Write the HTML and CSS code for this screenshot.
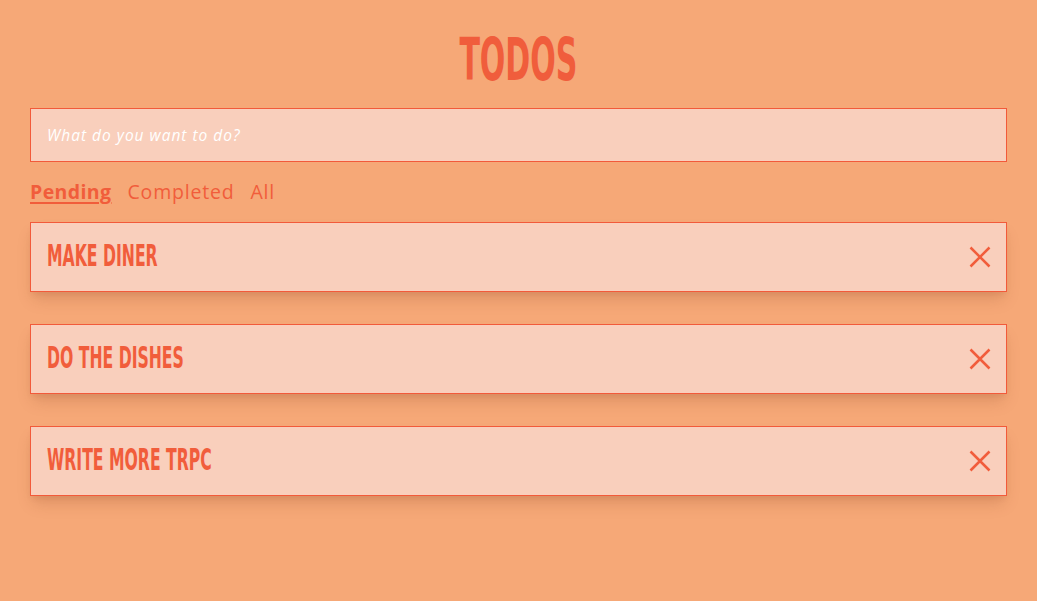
FILE: index.html
```html
<!DOCTYPE html>
<html lang="en">
<head>
<meta charset="utf-8">
<title>Todos</title>
<link rel="stylesheet" href="styles.css">
</head>
<body>
<main class="app">
  <h1 class="title"><span class="condensed">Todos</span></h1>
  <input class="new-todo" type="text" placeholder="What do you want to do?">
  <nav class="tabs">
    <a class="tab active" href="#">Pending</a>
    <a class="tab" href="#">Completed</a>
    <a class="tab" href="#">All</a>
  </nav>
  <ul class="list">
    <li class="card">
      <span class="card-text condensed">Make diner</span>
      <button class="remove" aria-label="Remove"><svg viewBox="0 0 22 22" width="22" height="22"><path d="M1.5 1.5 L20.5 20.5 M20.5 1.5 L1.5 20.5" /></svg></button>
    </li>
    <li class="card">
      <span class="card-text condensed">Do the dishes</span>
      <button class="remove" aria-label="Remove"><svg viewBox="0 0 22 22" width="22" height="22"><path d="M1.5 1.5 L20.5 20.5 M20.5 1.5 L1.5 20.5" /></svg></button>
    </li>
    <li class="card">
      <span class="card-text condensed">Write more tRPC</span>
      <button class="remove" aria-label="Remove"><svg viewBox="0 0 22 22" width="22" height="22"><path d="M1.5 1.5 L20.5 20.5 M20.5 1.5 L1.5 20.5" /></svg></button>
    </li>
  </ul>
</main>
</body>
</html>
```
FILE: styles.css
```css
html, body {
  margin: 0;
  padding: 0;
  background: #f6a877;
  height: 100%;
}
body {
  font-family: "Open Sans", "Liberation Sans", sans-serif;
  color: #f15d3b;
}
.app {
  padding: 27px 30px;
}
.condensed {
  display: inline-block;
  font-family: "DejaVu Sans Condensed", "DejaVu Sans", sans-serif;
  font-weight: 700;
  text-transform: uppercase;
  transform: scaleX(0.58);
}
.title {
  margin: 0;
  text-align: center;
  font-size: 59px;
  line-height: 60px;
  color: #f05d3c;
  font-weight: 700;
}
.title .condensed {
  transform: scaleX(0.565);
  transform-origin: center;
}
.new-todo {
  display: block;
  box-sizing: border-box;
  width: 100%;
  height: 54px;
  margin: 18px 0 0;
  padding: 0 16px;
  border: 1px solid #f25a3a;
  background: #f9cfbc;
  font-family: "Open Sans", sans-serif;
  font-size: 15.5px;
  letter-spacing: 1px;
  font-style: italic;
  color: #f15d3b;
  outline: none;
}
.new-todo::placeholder {
  color: #ffffff;
  opacity: 1;
}
.tabs {
  display: flex;
  gap: 16px;
  margin-top: 18px;
  font-size: 19.5px;
  letter-spacing: 0.8px;
  line-height: 24px;
}
.tab {
  color: #f15d3b;
  text-decoration: none;
}
.tab.active {
  font-weight: 700;
  letter-spacing: 0.4px;
  text-decoration: underline;
  text-decoration-thickness: 2px;
  text-underline-offset: 3px;
}
.list {
  list-style: none;
  margin: 18px 0 0;
  padding: 0;
  display: flex;
  flex-direction: column;
  gap: 32px;
}
.card {
  box-sizing: border-box;
  height: 70px;
  display: flex;
  align-items: center;
  justify-content: space-between;
  padding: 0 15px 0 16px;
  border: 1px solid #f25a3a;
  background: #f9cfbc;
  box-shadow: 0 10px 15px -3px rgba(120, 50, 20, 0.18), 0 4px 6px -2px rgba(120, 50, 20, 0.1);
}
.card-text {
  font-size: 30px;
  line-height: 32px;
  margin-top: -2px;
  color: #f15d3b;
  transform-origin: left center;
}
.remove {
  display: flex;
  padding: 0;
  border: 0;
  background: none;
  cursor: pointer;
}
.remove svg {
  stroke: #f15d3b;
  stroke-width: 2.5;
  fill: none;
}
```
